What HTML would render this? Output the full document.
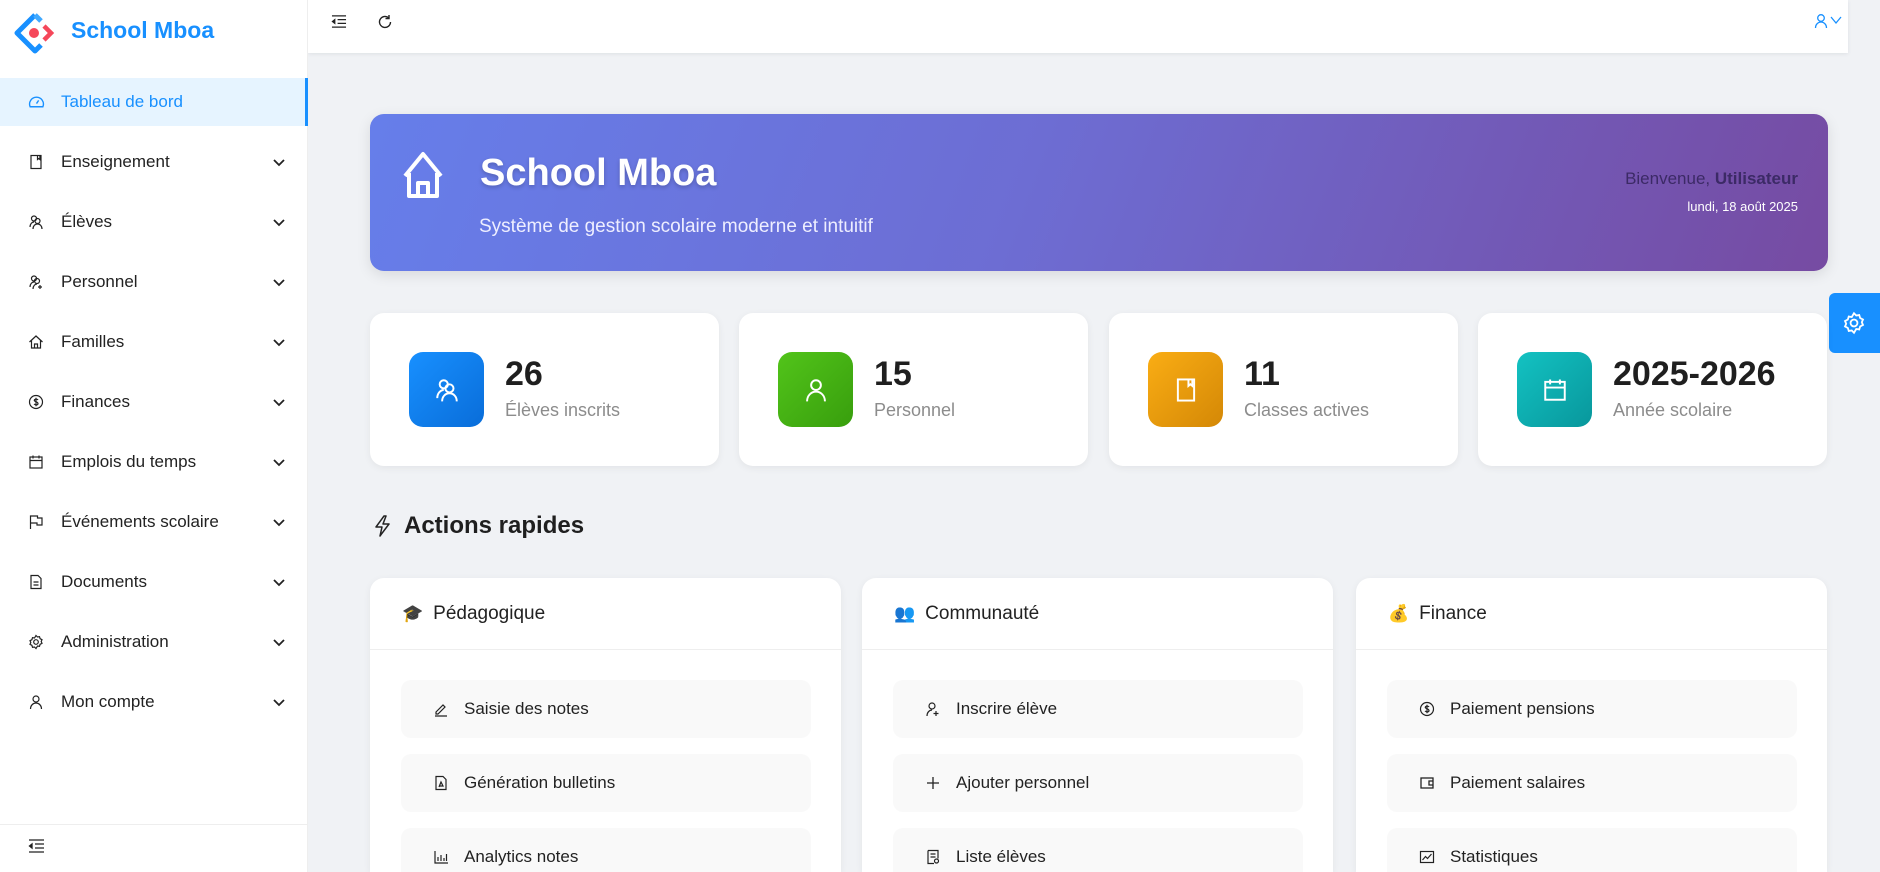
<!DOCTYPE html>
<html style="width:1880px;height:872px;overflow:hidden"><head><meta charset="utf-8"><style>
*{box-sizing:border-box;margin:0;padding:0}
body{width:1880px;height:872px;overflow:hidden;background:#f0f2f5;font-family:"Liberation Sans",Arial,sans-serif;position:relative;color:#222}
.abs{position:absolute}
#side{left:0;top:0;width:308px;height:872px;background:#fff;border-right:1px solid #eee;z-index:2}
.logo{left:14px;top:12px}
.brand{left:71px;top:17px;font-size:23px;font-weight:bold;color:#1890ff}
.mi{position:absolute;left:0;width:308px;height:48px;display:flex;align-items:center;font-size:17px;color:#222}
.mi svg.ic{position:absolute;left:28px}
.mi span{position:absolute;left:61px}
.mi .ch{position:absolute;left:272px}
.mi.act{background:#e6f4ff;color:#1890ff;border-right:3px solid #1890ff}
#top{left:308px;top:0;width:1540px;height:53px;background:#fff;box-shadow:0 1px 4px rgba(0,21,41,.08);z-index:1}
.banner{left:370px;top:114px;width:1458px;height:157px;border-radius:14px;background:linear-gradient(110deg,#667eea 0%,#6d6dd3 45%,#764ba2 100%);box-shadow:0 4px 14px rgba(0,0,0,.1);color:#fff}
.stat{top:313px;width:349px;height:153px;background:#fff;border-radius:14px;box-shadow:0 2px 8px rgba(0,0,0,.06)}
.sic{position:absolute;left:39px;top:39px;width:75px;height:75px;border-radius:14px;display:flex;align-items:center;justify-content:center}
.num{position:absolute;left:135px;top:42px;font-size:34px;font-weight:bold;color:#1f1f1f}
.lab{position:absolute;left:135px;top:87px;font-size:18px;color:#8c8c8c}
.card{top:578px;width:471px;height:294px;background:#fff;border-radius:14px 14px 0 0;box-shadow:0 2px 8px rgba(0,0,0,.06);overflow:hidden}
.ch2{position:absolute;left:0;top:0;width:100%;height:72px;border-bottom:1px solid #eee;font-size:19px;display:flex;align-items:center;padding-left:32px}
.ch2 b{font-weight:normal;margin-right:10px;font-size:17px}
.btn{position:absolute;left:31px;width:410px;height:58px;border-radius:10px;background:#f9f9f9;font-size:17px;display:flex;align-items:center}
.btn svg{position:absolute;left:32px}
.btn span{position:absolute;left:63px}
</style></head><body>
<div id="side" class="abs">
<svg class="abs logo" width="42" height="42" viewBox="0 0 42 42"><path d="M21 3 L3 21 L21 39 L27 33" fill="none" stroke="#1890ff" stroke-width="5" stroke-linejoin="round"/><path d="M21 3 L27 9" stroke="#40a9ff" stroke-width="5"/><path d="M30 14 L37 21 L30 28" fill="none" stroke="#f5475a" stroke-width="4.5"/><circle cx="20" cy="21" r="5" fill="#f5475a"/></svg>
<div class="abs brand">School Mboa</div>
<div class="mi act" style="top:78px"><svg class="ic" width="17" height="17" viewBox="0 0 16 16" fill="none" stroke="#1890ff" stroke-width="1.3"><path d="M2 12a6.5 6.5 0 1 1 12 0z"/><path d="M8 9l2-3"/></svg><span>Tableau de bord</span></div>
<div class="mi" style="top:138px"><svg class="ic" width="16" height="16" viewBox="0 0 16 16" fill="none" stroke="#222" stroke-width="1.2"><rect x="3" y="1.5" width="10" height="13"/><path d="M9.5 1.5v4l1.2-1 1.2 1v-4"/></svg><span>Enseignement</span><svg class="ch" width="14" height="14" viewBox="0 0 14 14"><path d="M2 5l5 5 5-5" fill="none" stroke="#222" stroke-width="1.8"/></svg></div>
<div class="mi" style="top:198px"><svg class="ic" width="16" height="16" viewBox="0 0 16 16" fill="none" stroke="#222" stroke-width="1.2"><circle cx="6" cy="4.5" r="2.5"/><circle cx="9.5" cy="7" r="2.5"/><path d="M2 13c0-3 2-5 4-5M5 15c0-3 2-5 4.5-5s4.5 2 4.5 5"/></svg><span>Élèves</span><svg class="ch" width="14" height="14" viewBox="0 0 14 14"><path d="M2 5l5 5 5-5" fill="none" stroke="#222" stroke-width="1.8"/></svg></div>
<div class="mi" style="top:258px"><svg class="ic" width="16" height="16" viewBox="0 0 16 16" fill="none" stroke="#222" stroke-width="1.2"><circle cx="6" cy="4.5" r="2.5"/><circle cx="9" cy="7" r="2.5"/><path d="M2 13c0-3 2-5 4-5M5 15c0-3 2-5 4-5M12 11v4M10 13h4"/></svg><span>Personnel</span><svg class="ch" width="14" height="14" viewBox="0 0 14 14"><path d="M2 5l5 5 5-5" fill="none" stroke="#222" stroke-width="1.8"/></svg></div>
<div class="mi" style="top:318px"><svg class="ic" width="16" height="16" viewBox="0 0 16 16" fill="none" stroke="#222" stroke-width="1.2"><path d="M1.5 8L8 2l6.5 6M3.5 6.5V14h9V6.5M6.5 14v-4h3v4"/></svg><span>Familles</span><svg class="ch" width="14" height="14" viewBox="0 0 14 14"><path d="M2 5l5 5 5-5" fill="none" stroke="#222" stroke-width="1.8"/></svg></div>
<div class="mi" style="top:378px"><svg class="ic" width="16" height="16" viewBox="0 0 16 16" fill="none" stroke="#222" stroke-width="1.2"><circle cx="8" cy="8" r="6.5"/><path d="M10 6c-.5-1-3.5-1.2-3.7.3S10 7.5 10 9.5 7 11 6 10M8 3.8v8.4"/></svg><span>Finances</span><svg class="ch" width="14" height="14" viewBox="0 0 14 14"><path d="M2 5l5 5 5-5" fill="none" stroke="#222" stroke-width="1.8"/></svg></div>
<div class="mi" style="top:438px"><svg class="ic" width="16" height="16" viewBox="0 0 16 16" fill="none" stroke="#222" stroke-width="1.2"><rect x="2" y="3" width="12" height="11"/><path d="M2 6.5h12M5 1.5v3M11 1.5v3"/></svg><span>Emplois du temps</span><svg class="ch" width="14" height="14" viewBox="0 0 14 14"><path d="M2 5l5 5 5-5" fill="none" stroke="#222" stroke-width="1.8"/></svg></div>
<div class="mi" style="top:498px"><svg class="ic" width="16" height="16" viewBox="0 0 16 16" fill="none" stroke="#222" stroke-width="1.2"><path d="M2.5 15V2h7v2H14v7H9v-2H2.5"/></svg><span>Événements scolaire</span><svg class="ch" width="14" height="14" viewBox="0 0 14 14"><path d="M2 5l5 5 5-5" fill="none" stroke="#222" stroke-width="1.8"/></svg></div>
<div class="mi" style="top:558px"><svg class="ic" width="16" height="16" viewBox="0 0 16 16" fill="none" stroke="#222" stroke-width="1.2"><path d="M3 1.5h7l3 3v10H3z M5.5 8h5M5.5 11h5"/></svg><span>Documents</span><svg class="ch" width="14" height="14" viewBox="0 0 14 14"><path d="M2 5l5 5 5-5" fill="none" stroke="#222" stroke-width="1.8"/></svg></div>
<div class="mi" style="top:618px"><svg class="ic" width="16" height="16" viewBox="0 0 16 16" fill="none" stroke="#222" stroke-width="1.2"><circle cx="8" cy="8" r="2.3"/><path d="M8 1.5l1.5 1.5 2-.3.6 2 1.9 1-.8 1.8.8 1.8-1.9 1-.6 2-2-.3L8 14.5 6.5 13l-2 .3-.6-2-1.9-1 .8-1.8L2 6.7l1.9-1 .6-2 2 .3z"/></svg><span>Administration</span><svg class="ch" width="14" height="14" viewBox="0 0 14 14"><path d="M2 5l5 5 5-5" fill="none" stroke="#222" stroke-width="1.8"/></svg></div>
<div class="mi" style="top:678px"><svg class="ic" width="16" height="16" viewBox="0 0 16 16" fill="none" stroke="#222" stroke-width="1.2"><circle cx="8" cy="5" r="3"/><path d="M2.5 15c0-3.5 2.5-6 5.5-6s5.5 2.5 5.5 6"/></svg><span>Mon compte</span><svg class="ch" width="14" height="14" viewBox="0 0 14 14"><path d="M2 5l5 5 5-5" fill="none" stroke="#222" stroke-width="1.8"/></svg></div>
<div class="abs" style="left:0;top:824px;width:308px;border-top:1px solid #eee"></div>
<svg class="abs" style="left:28px;top:838px" width="17" height="16" viewBox="0 0 17 16" fill="none" stroke="#222" stroke-width="1.3"><path d="M1 2h15M7 6h9M7 10h9M1 14h15"/><path d="M4 6L1.5 8 4 10z" fill="#222"/></svg>
</div>
<div id="top" class="abs">
<svg class="abs" style="left:23px;top:14px" width="16" height="15" viewBox="0 0 17 16" fill="none" stroke="#222" stroke-width="1.3"><path d="M1 2h15M7 6h9M7 10h9M1 14h15"/><path d="M4 6L1.5 8 4 10z" fill="#222"/></svg>
<svg class="abs" style="left:69px;top:14px" width="16" height="16" viewBox="0 0 16 16" fill="none" stroke="#222" stroke-width="1.4"><path d="M13.5 8A5.5 5.5 0 1 1 11.5 3.7"/><path d="M12 1v3.5H8.5"/></svg>
<svg class="abs" style="left:1506px;top:13px" width="32" height="16" viewBox="0 0 32 16" fill="none" stroke="#1890ff" stroke-width="1.3"><circle cx="7" cy="5" r="3.3"/><path d="M1.5 15c0-3.5 2.5-6 5.5-6s5.5 2.5 5.5 6"/><path d="M17 4l5 6 5-6"/></svg>
</div>
<div class="abs banner">
<svg class="abs" style="left:32px;top:34px" width="42" height="52" viewBox="0 0 42 52" fill="none" stroke="#fff" stroke-width="4" stroke-linejoin="round"><path d="M3 28L21 6l18 22M7 25v23h28V25M16 48V35h10v13"/></svg>
<div class="abs" style="left:110px;top:38px;font-size:38px;font-weight:bold;text-shadow:0 2px 4px rgba(0,0,0,.2)">School Mboa</div>
<div class="abs" style="left:109px;top:102px;font-size:19px;color:#eef">Système de gestion scolaire moderne et intuitif</div>
<div class="abs" style="right:30px;top:55px;font-size:17px;color:#3c2a66">Bienvenue, <b>Utilisateur</b></div>
<div class="abs" style="right:30px;top:85px;font-size:13px;color:#fff">lundi, 18 août 2025</div>
</div>
<div class="abs" style="left:1829px;top:293px;width:51px;height:60px;background:#1890ff;border-radius:6px 0 0 6px"><svg class="abs" style="left:13px;top:18px" width="24" height="24" viewBox="0 0 16 16" fill="none" stroke="#fff" stroke-width="1.2"><circle cx="8" cy="8" r="2.3"/><path d="M8 1.5l1.5 1.5 2-.3.6 2 1.9 1-.8 1.8.8 1.8-1.9 1-.6 2-2-.3L8 14.5 6.5 13l-2 .3-.6-2-1.9-1 .8-1.8L2 6.7l1.9-1 .6-2 2 .3z"/></svg></div>

<div class="abs stat" style="left:370px"><div class="sic" style="background:linear-gradient(135deg,#1890ff,#096dd9)"><svg width="26" height="26" viewBox="0 0 16 16" fill="none" stroke="#fff" stroke-width="1.2"><circle cx="6" cy="4.5" r="2.5"/><circle cx="9.5" cy="7" r="2.5"/><path d="M2 13c0-3 2-5 4-5M5 15c0-3 2-5 4.5-5s4.5 2 4.5 5"/></svg></div><div class="num">26</div><div class="lab">Élèves inscrits</div></div>
<div class="abs stat" style="left:739px"><div class="sic" style="background:linear-gradient(135deg,#52c41a,#389e0d)"><svg width="26" height="26" viewBox="0 0 16 16" fill="none" stroke="#fff" stroke-width="1.2"><circle cx="8" cy="5" r="3"/><path d="M2.5 15c0-3.5 2.5-6 5.5-6s5.5 2.5 5.5 6"/></svg></div><div class="num">15</div><div class="lab">Personnel</div></div>
<div class="abs stat" style="left:1109px"><div class="sic" style="background:linear-gradient(135deg,#faad14,#d48806)"><svg width="26" height="26" viewBox="0 0 16 16" fill="none" stroke="#fff" stroke-width="1.2"><rect x="3" y="1.5" width="10" height="13"/><path d="M9.5 1.5v4l1.2-1 1.2 1v-4"/></svg></div><div class="num">11</div><div class="lab">Classes actives</div></div>
<div class="abs stat" style="left:1478px"><div class="sic" style="background:linear-gradient(135deg,#13c2c2,#08979c)"><svg width="26" height="26" viewBox="0 0 16 16" fill="none" stroke="#fff" stroke-width="1.2"><rect x="2" y="3" width="12" height="11"/><path d="M2 6.5h12M5 1.5v3M11 1.5v3"/></svg></div><div class="num">2025-2026</div><div class="lab">Année scolaire</div></div>

<svg class="abs" style="left:373px;top:515px" width="18" height="22" viewBox="0 0 18 22" fill="none" stroke="#222" stroke-width="1.5" stroke-linejoin="round"><path d="M11 1L3 12h6l-2 9 9-12h-6l3-8z"/></svg>
<div class="abs" style="left:404px;top:512px;font-size:24px;font-weight:bold;color:#1f1f1f">Actions rapides</div>

<div class="abs card" style="left:370px"><div class="ch2"><b>🎓</b>Pédagogique</div>
<div class="btn" style="top:102px"><svg width="16" height="16" viewBox="0 0 16 16" fill="none" stroke="#222" stroke-width="1.2"><path d="M3 11l7-7 2 2-7 7H3zM2 15h12"/></svg><span>Saisie des notes</span></div>
<div class="btn" style="top:176px"><svg width="16" height="16" viewBox="0 0 16 16" fill="none" stroke="#222" stroke-width="1.2"><path d="M3 1.5h7l3 3v10H3z M6 12l2-5 2 4H6"/></svg><span>Génération bulletins</span></div>
<div class="btn" style="top:250px"><svg width="16" height="16" viewBox="0 0 16 16" fill="none" stroke="#222" stroke-width="1.2"><path d="M2 2v12h13M5 12V8M8 12V6M11 12V9M13.5 12V5"/></svg><span>Analytics notes</span></div>
</div>
<div class="abs card" style="left:862px"><div class="ch2"><b>👥</b>Communauté</div>
<div class="btn" style="top:102px"><svg width="16" height="16" viewBox="0 0 16 16" fill="none" stroke="#222" stroke-width="1.2"><circle cx="7" cy="5" r="3"/><path d="M2 15c0-3.5 2.3-6 5-6M11 10v5M8.5 12.5h5"/></svg><span>Inscrire élève</span></div>
<div class="btn" style="top:176px"><svg width="16" height="16" viewBox="0 0 16 16" fill="none" stroke="#222" stroke-width="1.3"><path d="M8 2v12M2 8h12"/></svg><span>Ajouter personnel</span></div>
<div class="btn" style="top:250px"><svg width="16" height="16" viewBox="0 0 16 16" fill="none" stroke="#222" stroke-width="1.2"><path d="M3 1.5h10v8M3 1.5v13h6M5.5 5h5M5.5 8h5"/><circle cx="11.5" cy="12" r="2"/></svg><span>Liste élèves</span></div>
</div>
<div class="abs card" style="left:1356px"><div class="ch2"><b>💰</b>Finance</div>
<div class="btn" style="top:102px"><svg width="16" height="16" viewBox="0 0 16 16" fill="none" stroke="#222" stroke-width="1.2"><circle cx="8" cy="8" r="6.5"/><path d="M10 6c-.5-1-3.5-1.2-3.7.3S10 7.5 10 9.5 7 11 6 10M8 3.8v8.4"/></svg><span>Paiement pensions</span></div>
<div class="btn" style="top:176px"><svg width="16" height="16" viewBox="0 0 16 16" fill="none" stroke="#222" stroke-width="1.3"><rect x="2" y="3" width="12" height="10"/><path d="M14 6h-4v4h4"/></svg><span>Paiement salaires</span></div>
<div class="btn" style="top:250px"><svg width="16" height="16" viewBox="0 0 16 16" fill="none" stroke="#222" stroke-width="1.2"><rect x="1.5" y="2.5" width="13" height="11"/><path d="M3.5 11l3-3.5 2 2 4-4.5"/></svg><span>Statistiques</span></div>
</div>
</body></html>
